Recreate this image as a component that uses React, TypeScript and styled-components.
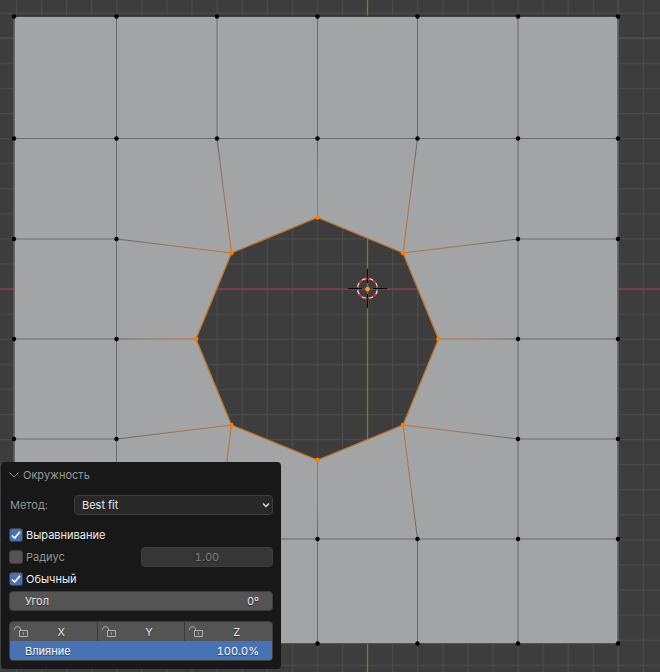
import React, { useId, useState } from "react";
import styled, { createGlobalStyle } from "styled-components";

const GlobalStyle = createGlobalStyle`
  *, *::before, *::after { box-sizing: border-box; }
  body {
    margin: 0;
    background: #3d3d3d;
    font-family: Inter, "Noto Sans", sans-serif;
  }
  button, input, select { font: inherit; }
`;

const Viewport = styled.main`
  position: relative;
  height: 100vh;
  overflow: hidden;
  background: #3d3d3d;
`;

const Scene = styled.svg`
  display: block;
  width: 100%;
  height: 100%;
`;

const Panel = styled.section`
  position: absolute;
  left: 1px;
  bottom: 3px;
  width: 280px;
  padding: 4px 8px 8px;
  border-radius: 4px;
  background: #181818;
  color: #e6e6e6;
  font-size: 11px;
  line-height: 18px;
  font-feature-settings: "tnum";
  text-shadow: 0 1px 1px rgba(0, 0, 0, 0.5);
`;

const Header = styled.button`
  display: flex;
  align-items: center;
  gap: 4px;
  width: 100%;
  height: 18px;
  padding: 0;
  border: 0;
  background: none;
  color: #989898;
  text-align: left;
`;

const MethodRow = styled.div`
  display: grid;
  grid-template-columns: 64px 1fr;
  align-items: center;
  margin-top: 11px;
  padding-left: 1px;
  color: #989898;
`;

const SelectBox = styled.div`
  display: grid;
  align-items: center;

  > * { grid-area: 1 / 1; }
  > svg { justify-self: end; margin-right: 2px; pointer-events: none; }
`;

const Select = styled.select`
  appearance: none;
  width: 100%;
  height: 20px;
  padding: 0 20px 0 7px;
  border: 1px solid #3d3d3d;
  border-radius: 4px;
  background: #282828;
  color: #e6e6e6;
`;

const Options = styled.div`
  display: grid;
  gap: 2px;
  margin-top: 10px;
`;

const OptionRow = styled.div`
  display: grid;
  grid-template-columns: 1fr 132px;
  align-items: center;
  height: 20px;
`;

const CheckLabel = styled.label<{ $muted?: boolean }>`
  display: flex;
  align-items: center;
  gap: 3px;
  color: ${(p) => (p.$muted ? "#989898" : "#f2f2f2")};
`;

const CheckCell = styled.span`
  display: grid;
  place-items: center;

  > * { grid-area: 1 / 1; }
  > svg { pointer-events: none; }
`;

const CheckInput = styled.input`
  appearance: none;
  width: 14px;
  height: 14px;
  margin: 0;
  border: 1px solid #3d3d3d;
  border-radius: 3px;
  background: #545454;

  &:checked { background: #4772b3; }
  & + svg { visibility: hidden; }
  &:checked + svg { visibility: visible; }
`;

const RadiusInput = styled.input`
  width: 132px;
  height: 20px;
  padding: 0;
  border: 1px solid #3d3d3d;
  border-radius: 4px;
  background: #363636;
  color: #808080;
  text-align: center;
  text-shadow: inherit;
`;

const Field = styled.label`
  display: flex;
  align-items: center;
  height: 20px;
  margin-top: 2px;
  padding: 0 13px 0 15px;
  border: 1px solid #3d3d3d;
  border-radius: 4px;
  background: #545454;
`;

const FieldInput = styled.input`
  flex: 1;
  min-width: 0;
  padding: 0;
  border: 0;
  background: none;
  color: inherit;
  text-align: right;
  text-shadow: inherit;
`;

const Group = styled.div`
  margin-top: 10px;
  overflow: hidden;
  border: 1px solid #3d3d3d;
  border-radius: 4px;
`;

const Axes = styled.div`
  display: grid;
  grid-template-columns: repeat(3, 1fr);
  gap: 1px;
  background: #3a3a3a;
`;

const AxisButton = styled.button`
  display: grid;
  grid-template-columns: 16px 1fr;
  align-items: center;
  height: 19px;
  padding: 0 3px;
  border: 0;
  background: #545454;
  color: #e6e6e6;
  text-shadow: inherit;
`;

const SliderField = styled.div`
  display: grid;
  grid-template-columns: 1fr auto;
  align-items: center;
  height: 19px;
  background: #545454;
`;

const SliderInput = styled.input`
  grid-area: 1 / 1 / 2 / 3;
  appearance: none;
  width: 100%;
  height: 19px;
  margin: 0;
  overflow: hidden;
  background: #545454;

  &::-webkit-slider-thumb {
    appearance: none;
    width: 1px;
    height: 19px;
    background: #4772b3;
    box-shadow: -400px 0 0 400px #4772b3;
  }
`;

const SliderLabel = styled.label`
  grid-area: 1 / 1;
  padding-left: 15px;
  color: #ffffff;
  pointer-events: none;
`;

const SliderValue = styled.output`
  grid-area: 1 / 2;
  padding-right: 13px;
  color: #ffffff;
  pointer-events: none;
`;

type Point = [number, number];

const columns = [14, 116.5, 217, 317.5, 417.5, 518, 618];
const rows = [16.5, 138.5, 239, 339, 439, 539, 643.5];

const ring: Point[] = [
  [317.5, 217.5], [403, 253], [438.5, 339], [403, 425],
  [317.5, 460], [231.5, 425], [196, 339], [231.5, 253],
];

const ringPath = `M${ring.map((p) => p.join(" ")).join("L")}Z`;

const spokes: [Point, Point][] = [
  [[317.5, 138.5], ring[0]],
  [[417.5, 138.5], ring[1]],
  [[518, 239], ring[1]],
  [[518, 339], ring[2]],
  [[518, 439], ring[3]],
  [[417.5, 539], ring[3]],
  [[317.5, 539], ring[4]],
  [[217, 539], ring[5]],
  [[116.5, 439], ring[5]],
  [[116.5, 339], ring[6]],
  [[116.5, 239], ring[7]],
  [[217, 138.5], ring[7]],
];

const edges = [
  ...[0, 1, 5, 6].map((i) => `M${columns[i]} 16.5V643.5`),
  ...[0, 1, 5, 6].map((i) => `M14 ${rows[i]}H618`),
  ...[2, 3, 4].map((i) => `M${columns[i]} 16.5V138.5M${columns[i]} 539V643.5`),
  ...[2, 3, 4].map((i) => `M14 ${rows[i]}H116.5M518 ${rows[i]}H618`),
].join("");

const vertices: Point[] = rows.flatMap((y, r) =>
  columns
    .filter((_, c) => r < 2 || r > 4 || c < 2 || c > 4)
    .map((x): Point => [x, y])
);

function MeshScene() {
  return (
    <Scene role="img" aria-label="Сетка">
      <defs>
        <pattern id="grid" x="367" y="288.5" width="25.08" height="25.08" patternUnits="userSpaceOnUse">
          <path d="M0.6 0V25.08M0 0.6H25.08" stroke="#4b4b4b" strokeWidth="1.3" />
        </pattern>
        {spokes.map(([a, b], i) => (
          <linearGradient
            key={i}
            id={`spoke${i}`}
            gradientUnits="userSpaceOnUse"
            x1={a[0]} y1={a[1]} x2={b[0]} y2={b[1]}
          >
            <stop offset="0" stopColor="#666666" />
            <stop offset="0.45" stopColor="#96745a" />
            <stop offset="1" stopColor="#c86f22" />
          </linearGradient>
        ))}
      </defs>
      <rect width="100%" height="100%" fill="url(#grid)" />
      <path d="M0 38H5000M618 0V5000" stroke="#525252" />
      <path d="M0 289H5000" stroke="#913a45" strokeWidth="1.6" />
      <path d="M367.5 0V5000" stroke="#638a2a" strokeWidth="1.2" />
      <path d={`M14 16.5H618V643.5H14Z${ringPath}`} fill="#a3a4a6" fillRule="evenodd" />
      <path d={edges} fill="none" stroke="#6a6a6a" />
      <path d="M14 16.5H618V643.5H14Z" fill="none" stroke="#555555" />
      <path d="M14 16H618" stroke="#303030" />
      {spokes.map(([a, b], i) => (
        <path key={i} d={`M${a.join(" ")}L${b.join(" ")}`} stroke={`url(#spoke${i})`} />
      ))}
      <path d={ringPath} fill="none" stroke="#c27528" strokeWidth="1.3" />
      {vertices.map(([x, y]) => (
        <circle key={`${x}-${y}`} cx={x} cy={y} r="2.2" fill="#000000" />
      ))}
      {ring.map(([x, y]) => (
        <circle key={`${x}-${y}`} cx={x} cy={y} r="2.3" fill="#ff7a00" />
      ))}
      <circle cx="367.5" cy="288.5" r="10" fill="none" stroke="#f2f2f2" strokeWidth="1.2" />
      <circle
        cx="367.5" cy="288.5" r="10" fill="none" stroke="#e01b1b" strokeWidth="1.6"
        pathLength="16" strokeDasharray="1 1" strokeDashoffset="0.5"
      />
      <path d="M348 288.5H362M373 288.5H387M367.5 269V283M367.5 294V308" stroke="#000000" />
      <circle cx="367.5" cy="289" r="2.6" fill="#ffa028" stroke="#5a3b1c" strokeWidth="0.6" />
    </Scene>
  );
}

function OpenLock() {
  return (
    <svg width="16" height="14" viewBox="0 0 16 14" fill="none" stroke="#b0b0b0" aria-hidden="true">
      <path d="M1.5 5V4.5C1.5 0.7 7.5 0.7 7.5 4.5V6" />
      <path d="M6.5 5.5H14.5V11.5H6.5Z" />
      <path d="M10.5 7.5V9.5" />
    </svg>
  );
}

interface CheckProps {
  label: string;
  defaultChecked?: boolean;
  muted?: boolean;
}

function Check({ label, defaultChecked, muted }: CheckProps) {
  return (
    <CheckLabel $muted={muted}>
      <CheckCell>
        <CheckInput type="checkbox" defaultChecked={defaultChecked} />
        <svg width="12" height="12" viewBox="0 0 12 12" aria-hidden="true">
          <path d="M2 6.5L4.7 9L10 2.8" fill="none" stroke="#ffffff" strokeWidth="1.7" />
        </svg>
      </CheckCell>
      {label}
    </CheckLabel>
  );
}

function CirclePanel() {
  const methodId = useId();
  const influenceId = useId();
  const [influence, setInfluence] = useState(100);

  return (
    <Panel>
      <Header type="button" aria-expanded="true">
        <svg width="10" height="8" viewBox="0 0 10 8" aria-hidden="true">
          <path d="M0.5 1.5L5 6L9.5 1.5" fill="none" stroke="#8c8c8c" />
        </svg>
        Окружность
      </Header>
      <MethodRow>
        <label htmlFor={methodId}>Метод:</label>
        <SelectBox>
          <Select id={methodId} defaultValue="best">
            <option value="best">Best fit</option>
          </Select>
          <svg width="10" height="8" viewBox="0 0 10 8" aria-hidden="true">
            <path d="M2 2.5L5 5.5L8 2.5" fill="none" stroke="#e0e0e0" strokeWidth="1.4" />
          </svg>
        </SelectBox>
      </MethodRow>
      <Options>
        <OptionRow>
          <Check label="Выравнивание" defaultChecked />
        </OptionRow>
        <OptionRow>
          <Check label="Радиус" muted />
          <RadiusInput aria-label="Радиус" defaultValue="1.00" disabled />
        </OptionRow>
        <OptionRow>
          <Check label="Обычный" defaultChecked />
        </OptionRow>
      </Options>
      <Field>
        Угол
        <FieldInput defaultValue="0º" />
      </Field>
      <Group>
        <Axes>
          {["X", "Y", "Z"].map((axis) => (
            <AxisButton key={axis} type="button" aria-pressed="false">
              <OpenLock />
              <span>{axis}</span>
            </AxisButton>
          ))}
        </Axes>
        <SliderField>
          <SliderInput
            id={influenceId}
            type="range"
            min={0}
            max={100}
            value={influence}
            onChange={(e) => setInfluence(Number(e.target.value))}
          />
          <SliderLabel htmlFor={influenceId}>Влияние</SliderLabel>
          <SliderValue htmlFor={influenceId}>{influence.toFixed(1)}%</SliderValue>
        </SliderField>
      </Group>
    </Panel>
  );
}

export default function App() {
  return (
    <>
      <GlobalStyle />
      <Viewport>
        <MeshScene />
        <CirclePanel />
      </Viewport>
    </>
  );
}
